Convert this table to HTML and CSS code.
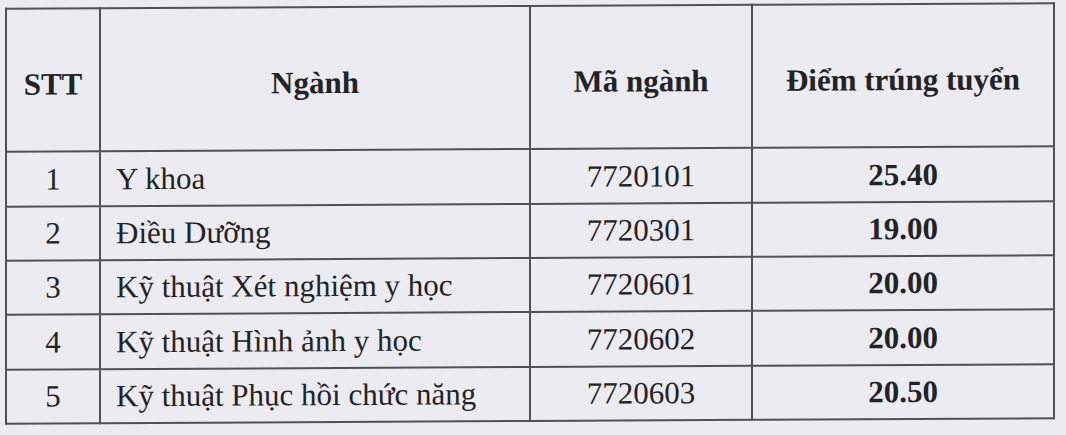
FILE: index.html
```html
<!DOCTYPE html>
<html lang="vi">
<head>
<meta charset="utf-8">
<title>Điểm trúng tuyển</title>
<link rel="stylesheet" href="styles.css">
</head>
<body>
<div class="page">
  <table class="scores">
    <colgroup>
      <col class="c-stt">
      <col class="c-name">
      <col class="c-code">
      <col class="c-score">
    </colgroup>
    <thead>
      <tr class="head-row">
        <th>STT</th>
        <th>Ngành</th>
        <th>Mã ngành</th>
        <th>Điểm trúng tuyển</th>
      </tr>
    </thead>
    <tbody>
      <tr class="r55"><td class="num">1</td><td class="name">Y khoa</td><td class="code">7720101</td><td class="score">25.40</td></tr>
      <tr class="r54"><td class="num">2</td><td class="name">Điều Dưỡng</td><td class="code">7720301</td><td class="score">19.00</td></tr>
      <tr class="r54"><td class="num">3</td><td class="name">Kỹ thuật Xét nghiệm y học</td><td class="code">7720601</td><td class="score">20.00</td></tr>
      <tr class="r55"><td class="num">4</td><td class="name">Kỹ thuật Hình ảnh y học</td><td class="code">7720602</td><td class="score">20.00</td></tr>
      <tr class="r54"><td class="num">5</td><td class="name">Kỹ thuật Phục hồi chức năng</td><td class="code">7720603</td><td class="score">20.50</td></tr>
    </tbody>
  </table>
</div>
</body>
</html>
```

FILE: styles.css
```css
html, body {
  margin: 0;
  padding: 0;
  background: #ebebf1;
}

.page {
  width: 1066px;
  height: 435px;
  padding: 5px 0 0 5px;
  box-sizing: border-box;
  overflow: hidden;
}

.scores {
  border-collapse: collapse;
  table-layout: fixed;
  width: 1048px;
  font-family: "Liberation Serif", "Times New Roman", serif;
  font-size: 31px;
  color: #232327;
  transform: skewY(-0.3deg);
  transform-origin: 50% 50%;
}

.c-stt { width: 94px; }
.c-name { width: 430px; }
.c-code { width: 222px; }
.c-score { width: 302px; }

.scores th,
.scores td {
  border: 2px solid #505056;
  padding: 0;
  vertical-align: middle;
  line-height: 34px;
}

.scores th {
  font-weight: bold;
  text-align: center;
  padding-top: 8px;
}

.head-row { height: 143px; }
.r55 { height: 55px; }
.r54 { height: 54px; }

.num { text-align: center; }
.name { text-align: left; padding-left: 15px !important; }
.code { text-align: center; }
.score { text-align: center; font-weight: bold; }
```
